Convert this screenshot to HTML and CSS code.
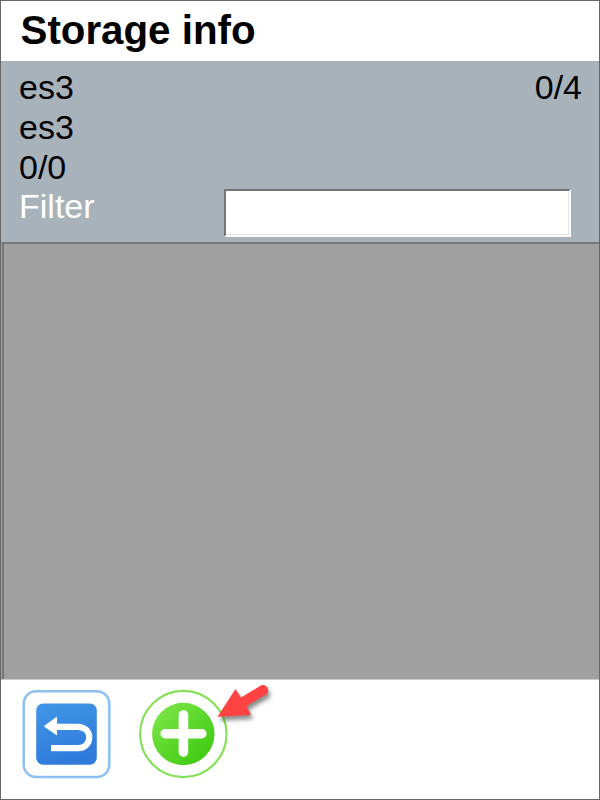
FILE: index.html
```html
<!DOCTYPE html>
<html lang="en">
<head>
<meta charset="utf-8">
<title>Storage info</title>
<link rel="stylesheet" href="styles.css">
</head>
<body>
<main class="window">
  <header class="title-bar"><h1>Storage info</h1></header>
  <section class="details">
    <div class="row"><span>es3</span><span>0/4</span></div>
    <div class="row"><span>es3</span></div>
    <div class="row"><span>0/0</span></div>
    <div class="row filter-row">
      <label class="filter-label" for="filter">Filter</label>
      <input class="filter-input" id="filter" type="text">
    </div>
  </section>
  <section class="list"></section>
  <footer class="toolbar">
    <button class="tool" type="button" aria-label="Back">
      <svg width="90" height="90" viewBox="0 0 90 90">
        <defs><linearGradient id="blue" x1="0" y1="0" x2="0.3" y2="1"><stop offset="0" stop-color="#4197e6"/><stop offset="1" stop-color="#2f7bdc"/></linearGradient></defs>
        <rect x="2.7" y="2.2" width="85.6" height="85.8" rx="12.5" fill="#fff" stroke="#8bc0f1" stroke-width="2.5"/>
        <rect x="15.2" y="14.5" width="60.6" height="61.3" rx="7" fill="url(#blue)"/>
        <path d="M33 37.8H57C72 38 72 59 57 59.1H30" fill="none" stroke="#fff" stroke-width="6.2"/>
        <path d="M22.7 37.3L36 27.5V46.5Z" fill="#fff"/>
      </svg>
    </button>
    <button class="tool" type="button" aria-label="Add">
      <svg width="90" height="90" viewBox="0 0 90 90">
        <defs><linearGradient id="green" x1="0.1" y1="0.1" x2="0.85" y2="0.9"><stop offset="0" stop-color="#7be447"/><stop offset="1" stop-color="#3fcb12"/></linearGradient></defs>
        <circle cx="45.3" cy="45" r="43.2" fill="#fff" stroke="#86e05a" stroke-width="2.2"/>
        <circle cx="45.3" cy="45" r="31.2" fill="url(#green)"/>
        <path d="M45.4 26V63.2M27.2 44.7H63.8" stroke="#fff" stroke-width="9.6" stroke-linecap="round"/>
      </svg>
      <svg class="pointer" width="70" height="52" viewBox="0 0 70 52">
        <path d="M6.5 40.8L24.5 13L30 21.5L49 10A5.2 5.2 0 0 1 55 18.5L35.5 30L40 39Z" fill="#ff4343"/>
      </svg>
    </button>
  </footer>
</main>
</body>
</html>
```
FILE: styles.css
```css
* { box-sizing: border-box; }

body {
  margin: 0;
  font-family: "Liberation Sans", Arial, sans-serif;
  color: #000;
}

.window {
  display: flex;
  flex-direction: column;
  width: 600px;
  height: 800px;
  border: 1px solid #666;
  background: #fff;
}

.title-bar {
  height: 60px;
  padding: 7px 0 0 19.5px;
}

h1 {
  margin: 0;
  font-size: 40.3px;
  line-height: 46px;
  font-weight: bold;
}

.details {
  height: 181px;
  padding: 6px 17px 0 18px;
  background: #a8b2ba;
  font-size: 34px;
}

.row {
  display: flex;
  justify-content: space-between;
  height: 40px;
  line-height: 40px;
}

.filter-row { justify-content: flex-start; }

.filter-label {
  width: 205px;
  line-height: 38px;
  color: #fff;
}

.filter-input {
  width: 347px;
  height: 48px;
  margin-top: 2px;
  padding: 0 6px;
  border: 2px solid;
  border-color: #747474 #fff #fff #747474;
  border-radius: 0;
  background: #fff;
  box-shadow: inset -1px -1px #e6e3e0;
  font: inherit;
  outline: 0;
}

.list {
  height: 438px;
  border-top: 2px solid #777;
  border-left: 1px solid #a0a0a0;
  border-bottom: 1px solid #ccc;
  background: #a0a0a0;
  box-shadow: inset 2px 0 #777;
}

.toolbar {
  display: flex;
  gap: 27px;
  padding: 9px 0 0 20px;
}

.tool {
  position: relative;
  width: 90px;
  height: 90px;
  padding: 0;
  border: 0;
  background: none;
}

.tool svg { display: block; }

.tool .pointer {
  position: absolute;
  left: 73px;
  top: -13px;
  filter: drop-shadow(2px 4px 2px rgba(0, 0, 0, 0.45));
}
```
